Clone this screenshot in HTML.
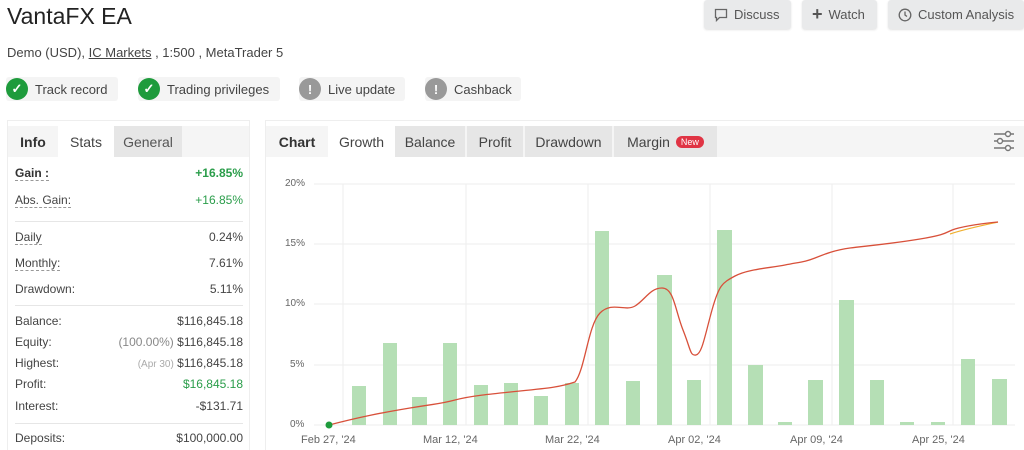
<!DOCTYPE html>
<html><head><meta charset="utf-8"><style>
*{box-sizing:border-box;margin:0;padding:0}
body{width:1024px;height:450px;overflow:hidden;background:#fff;font-family:"Liberation Sans",sans-serif;color:#333;position:relative}
.a{position:absolute}
.btn{position:absolute;top:0;height:29px;background:#e9eaeb;border-radius:3px;font-size:13px;color:#555;display:flex;align-items:center;padding-left:10px;box-shadow:0 1px 2px rgba(0,0,0,.12)}
.pill{position:absolute;top:77px;height:24px;background:#f4f4f4;border-radius:3px;font-size:13px;color:#444;display:flex;align-items:center}
.ic{width:22px;height:22px;border-radius:50%;display:flex;align-items:center;justify-content:center;color:#fff;font-weight:bold;margin-right:7px}
.tab{position:absolute;top:126px;height:31px;font-size:14px;display:flex;align-items:center;justify-content:center;color:#444}
.row{position:absolute;left:15px;width:228px;font-size:12px;color:#444;display:flex;justify-content:space-between}
.row span:first-child{}
.u{border-bottom:1px dashed #999}
.sep{position:absolute;left:15px;width:228px;height:1px;background:#e6e6e6}
.g{color:#2a9d4a}
.yl{position:absolute;left:285px;font-size:10px;color:#666}
.xl{position:absolute;top:434px;font-size:11px;color:#666}
</style></head><body>
<div class="a" style="left:7px;top:3px;font-size:23px;color:#222">VantaFX EA</div>
<div class="a" style="left:7px;top:45px;font-size:13px;color:#444">Demo (USD), <span style="text-decoration:underline">IC Markets</span> , 1:500 , MetaTrader 5</div>
<div class="btn" style="left:704px;width:87px"><svg width="14" height="14" viewBox="0 0 14 14" style="margin-right:6px"><path d="M1.5 1.5h11v8h-7l-3 3v-3h-1z" fill="none" stroke="#666" stroke-width="1.3"/></svg>Discuss</div>
<div class="btn" style="left:802px;width:75px"><span style="font-size:18px;color:#555;margin-right:6px;font-weight:bold">+</span>Watch</div>
<div class="btn" style="left:888px;width:136px"><svg width="14" height="14" viewBox="0 0 14 14" style="margin-right:6px"><circle cx="7" cy="7" r="5.8" fill="none" stroke="#666" stroke-width="1.3"/><path d="M7 3.5V7l2 1.5" fill="none" stroke="#666" stroke-width="1.3"/></svg>Custom Analysis</div>

<div class="pill" style="left:6px;width:112px"><div class="ic" style="background:#1e9b3c">✓</div>Track record</div>
<div class="pill" style="left:138px;width:142px"><div class="ic" style="background:#1e9b3c">✓</div>Trading privileges</div>
<div class="pill" style="left:299px;width:106px"><div class="ic" style="background:#999">!</div>Live update</div>
<div class="pill" style="left:425px;width:96px"><div class="ic" style="background:#999">!</div>Cashback</div>

<div class="a" style="left:7px;top:120px;width:243px;height:330px;border:1px solid #eee;border-bottom:none"></div>
<div class="tab" style="left:8px;width:50px;background:#f5f5f5;font-weight:bold;color:#333">Info</div>
<div class="tab" style="left:58px;width:56px;background:#fff">Stats</div>
<div class="tab" style="left:114px;width:68px;background:#e6e6e6;color:#555">General</div>
<div class="a" style="left:182px;top:126px;width:67px;height:31px;background:#f5f5f5"></div>

<div class="row" style="top:166px"><span class="u" style="font-weight:bold;color:#333">Gain :</span><span class="g" style="font-weight:bold">+16.85%</span></div>
<div class="row" style="top:193px"><span class="u">Abs. Gain:</span><span class="g">+16.85%</span></div>
<div class="sep" style="top:221px"></div>
<div class="row" style="top:230px"><span class="u">Daily</span><span>0.24%</span></div>
<div class="row" style="top:256px"><span class="u">Monthly:</span><span>7.61%</span></div>
<div class="row" style="top:282px"><span>Drawdown:</span><span>5.11%</span></div>
<div class="sep" style="top:305px"></div>
<div class="row" style="top:314px"><span>Balance:</span><span>$116,845.18</span></div>
<div class="row" style="top:335px"><span>Equity:</span><span><span style="color:#888">(100.00%)</span> $116,845.18</span></div>
<div class="row" style="top:356px"><span>Highest:</span><span><span style="color:#aaa;font-size:10px">(Apr 30)</span> $116,845.18</span></div>
<div class="row" style="top:377px"><span>Profit:</span><span class="g">$16,845.18</span></div>
<div class="row" style="top:399px"><span>Interest:</span><span>-$131.71</span></div>
<div class="sep" style="top:423px"></div>
<div class="row" style="top:431px"><span>Deposits:</span><span>$100,000.00</span></div>

<div class="a" style="left:265px;top:120px;width:759px;height:330px;border:1px solid #eee;border-right:none;border-bottom:none"></div>
<div class="a" style="left:266px;top:126px;width:758px;height:31px;background:#f5f5f5"></div>
<div class="tab" style="left:266px;width:62px;font-weight:bold;color:#333">Chart</div>
<div class="tab" style="left:328px;width:67px;background:#fff">Growth</div>
<div class="tab" style="left:395px;width:70px;background:#e6e6e6">Balance</div>
<div class="tab" style="left:467px;width:56px;background:#e6e6e6">Profit</div>
<div class="tab" style="left:525px;width:87px;background:#e6e6e6">Drawdown</div>
<div class="tab" style="left:614px;width:103px;background:#e6e6e6">Margin <span style="background:#e03444;color:#fff;font-size:9px;border-radius:7px;padding:1px 5px;margin-left:6px">New</span></div>
<svg class="a" style="left:992px;top:130px" width="24" height="22" viewBox="0 0 24 22"><g stroke="#777" stroke-width="1.4" fill="#fff"><path d="M2 4h20M2 11h20M2 18h20"/><circle cx="16" cy="4" r="2.5"/><circle cx="8" cy="11" r="2.5"/><circle cx="16" cy="18" r="2.5"/></g></svg>

<div class="yl" style="top:178px">20%</div>
<div class="yl" style="top:238px">15%</div>
<div class="yl" style="top:298px">10%</div>
<div class="yl" style="top:359px;left:290px">5%</div>
<div class="yl" style="top:419px;left:290px">0%</div>
<svg class="a" style="left:0;top:0" width="1024" height="450">
<g stroke="#eeeeee" stroke-width="1">
<path d="M314 184H1015M314 244H1015M314 304H1015M314 365H1015M314 425H1015"/>
<path d="M343 184V425M466 184V425M588 184V425M710 184V425M832 184V425M953 184V425"/>
</g>
<g fill="#b5dfb5">
<rect x="352" y="386" width="14" height="39"/>
<rect x="383" y="343" width="14" height="82"/>
<rect x="412" y="397" width="15" height="28"/>
<rect x="443" y="343" width="14" height="82"/>
<rect x="474" y="385" width="14" height="40"/>
<rect x="504" y="383" width="14" height="42"/>
<rect x="534" y="396" width="14" height="29"/>
<rect x="565" y="383" width="14" height="42"/>
<rect x="595" y="231" width="14" height="194"/>
<rect x="626" y="381" width="14" height="44"/>
<rect x="657" y="275" width="15" height="150"/>
<rect x="687" y="380" width="14" height="45"/>
<rect x="717" y="230" width="15" height="195"/>
<rect x="748" y="365" width="15" height="60"/>
<rect x="778" y="422" width="14" height="3"/>
<rect x="808" y="380" width="15" height="45"/>
<rect x="839" y="300" width="15" height="125"/>
<rect x="870" y="380" width="14" height="45"/>
<rect x="900" y="422" width="14" height="3"/>
<rect x="931" y="422" width="14" height="3"/>
<rect x="961" y="359" width="14" height="66"/>
<rect x="992" y="379" width="15" height="46"/>
</g>
<path d="M950 234C965 229 980 226 998 222" stroke="#f0b030" stroke-width="1.2" fill="none"/>
<path d="M329 425C360 417 380 413 410 408S440 404 455 400S490 394 520 391S560 387 575 382C585 370 588 325 600 313S625 312 635 306S650 288 662 288S675 310 683 330S690 356 696 355S705 335 712 310S722 283 735 276S770 268 785 265S805 262 815 258S835 250 850 248S890 244 920 239S945 232 955 229S985 223 998 222" stroke="#d8503a" stroke-width="1.3" fill="none"/>
<circle cx="329" cy="425" r="3.5" fill="#1e9b3c"/>
</svg>
<div class="xl" style="left:301px">Feb 27, '24</div>
<div class="xl" style="left:423px">Mar 12, '24</div>
<div class="xl" style="left:545px">Mar 22, '24</div>
<div class="xl" style="left:668px">Apr 02, '24</div>
<div class="xl" style="left:790px">Apr 09, '24</div>
<div class="xl" style="left:912px">Apr 25, '24</div>
</body></html>
